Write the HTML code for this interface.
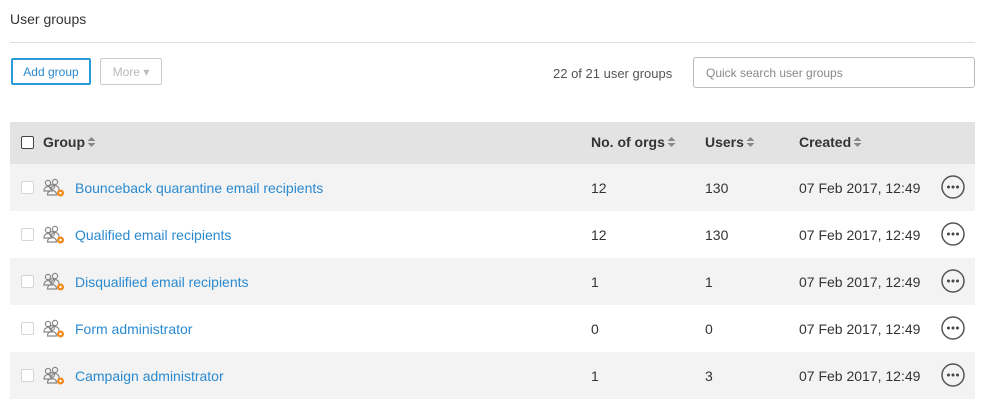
<!DOCTYPE html>
<html><head><style>
body{margin:0;width:986px;height:402px;overflow:hidden;background:#fff;font-family:"Liberation Sans",sans-serif;color:#333;position:relative}
.a{position:absolute}
.t{font-size:14px;top:11px;left:10px;color:#333}
.hr{top:42px;left:10px;width:965px;height:1px;background:#ddd}
.btn{top:58px;height:27px;border:1px solid #ccc;border-radius:2px;font-size:12px;line-height:27px;text-align:center;box-sizing:border-box}
.row{left:10px;width:965px;height:47px}
.cell{position:absolute;font-size:14px;top:16px}
.lnk{color:#2a8ad0}
.cb{position:absolute;left:11px;top:17px;width:11px;height:11px;border:1px solid #d5d5d5;border-radius:2px;background:#fff}
.sort{display:inline-block;vertical-align:-1px;margin-left:2px}
</style></head><body>
<div class="a t">User groups</div>
<div class="a hr"></div>
<div class="a btn" style="left:11px;width:80px;border:2px solid #2a9ad8;color:#2a8ad0;line-height:25px">Add group</div>
<div class="a btn" style="left:100px;width:62px;color:#bbb">More ▾</div>
<div class="a" style="top:66px;left:553px;font-size:13px;color:#555">22 of 21 user groups</div>
<div class="a" style="top:57px;left:693px;width:282px;height:31px;border:1px solid #bbb;border-radius:3px;box-sizing:border-box;font-size:12px;color:#888;padding:8px 12px">Quick search user groups</div>
<div class="a row" style="top:122px;height:42px;background:#e3e3e3;font-weight:bold">
<div style="position:absolute;left:11px;top:14px;width:11px;height:11px;border:1.5px solid #444;border-radius:2px;background:#fff"></div>
<div class="cell" style="left:33px;top:12px">Group<svg class="sort" width="9" height="12" viewBox="0 0 9 12"><path d="M0.5 5L4.5 1L8.5 5z M0.5 7L4.5 11L8.5 7z" fill="#888"/></svg></div>
<div class="cell" style="left:581px;top:12px">No. of orgs<svg class="sort" width="9" height="12" viewBox="0 0 9 12"><path d="M0.5 5L4.5 1L8.5 5z M0.5 7L4.5 11L8.5 7z" fill="#888"/></svg></div>
<div class="cell" style="left:695px;top:12px">Users<svg class="sort" width="9" height="12" viewBox="0 0 9 12"><path d="M0.5 5L4.5 1L8.5 5z M0.5 7L4.5 11L8.5 7z" fill="#888"/></svg></div>
<div class="cell" style="left:789px;top:12px">Created<svg class="sort" width="9" height="12" viewBox="0 0 9 12"><path d="M0.5 5L4.5 1L8.5 5z M0.5 7L4.5 11L8.5 7z" fill="#888"/></svg></div>
</div>
<div id="rows"></div>
<script>
var d=[["Bounceback quarantine email recipients",12,130],["Qualified email recipients",12,130],["Disqualified email recipients",1,1],["Form administrator",0,0],["Campaign administrator",1,3]];
var h="";
d.forEach(function(r,i){
h+='<div class="a row" style="top:'+(164+i*47)+'px;background:'+(i%2?'#fff':'#f3f3f3')+'"><div class="cb"></div>'+
'<svg style="position:absolute;left:33px;top:14px" width="24" height="20" viewBox="0 0 24 20"><g fill="none" stroke="#888" stroke-width="1.2"><circle cx="5" cy="5" r="2.6"/><circle cx="12" cy="4" r="2.6"/><path d="M1 13c0-3 2-4.5 4-4.5s4 1.5 4 4.5z"/><path d="M8 12c0-3 2-4.5 4-4.5s4 1.5 4 4.5"/><circle cx="9" cy="9" r="2.4"/><path d="M4.5 17c0-3 2-4.5 4.5-4.5s4.5 1.5 4.5 4.5z"/></g><circle cx="17.5" cy="15" r="3.5" fill="#f08a1c"/><circle cx="17.5" cy="15" r="1.2" fill="#fff"/></svg>'+
'<div class="cell lnk" style="left:65px">'+r[0]+'</div><div class="cell" style="left:581px">'+r[1]+'</div><div class="cell" style="left:695px">'+r[2]+'</div><div class="cell" style="left:789px">07 Feb 2017, 12:49</div>'+
'<svg style="position:absolute;left:931px;top:11px" width="24" height="24" viewBox="0 0 24 24"><circle cx="12" cy="12" r="11" fill="none" stroke="#555" stroke-width="1.5"/><circle cx="7.5" cy="12" r="1.5" fill="#444"/><circle cx="12" cy="12" r="1.5" fill="#444"/><circle cx="16.5" cy="12" r="1.5" fill="#444"/></svg></div>';
});
document.getElementById("rows").innerHTML=h;
</script>
</body></html>
